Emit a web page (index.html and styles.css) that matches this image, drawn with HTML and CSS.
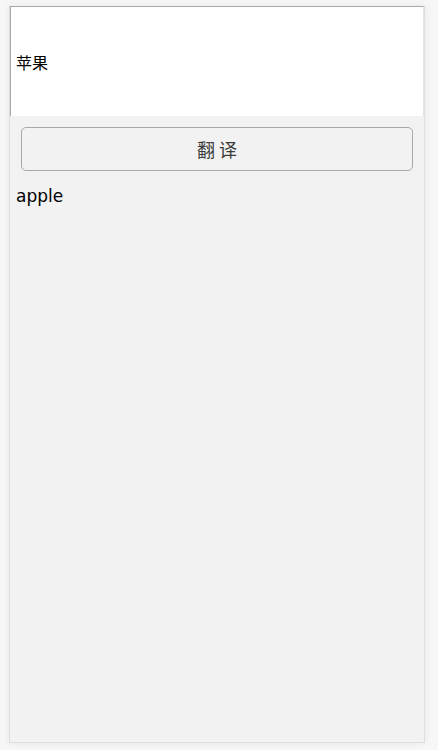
FILE: index.html
```html
<!DOCTYPE html>
<html lang="zh">
<head>
<meta charset="utf-8">
<title>翻译</title>
<link rel="stylesheet" href="styles.css">
</head>
<body>
<div class="app">
  <input class="source" type="text" value="苹果">
  <button class="translate">翻 译</button>
  <div class="result">apple</div>
</div>
</body>
</html>
```
FILE: styles.css
```css
html, body {
  margin: 0;
  padding: 0;
  background: #f7f7f7;
}
body {
  padding: 6px 13px 7px 9px;
  font-family: "DejaVu Sans", "Noto Sans CJK SC", sans-serif;
}
.app {
  height: 737px;
  box-sizing: border-box;
  background: #f2f2f2;
  border: 1px solid #dedede;
  border-top: none;
  box-shadow: 0 0 8px rgba(0, 0, 0, 0.07);
  display: flex;
  flex-direction: column;
}
.source {
  display: block;
  box-sizing: border-box;
  width: 100%;
  height: 110px;
  margin: 0;
  padding: 0 0 0 5px;
  background: #fff;
  border: none;
  border-top: 1px solid #a8a8a8;
  border-left: 1px solid #a8a8a8;
  border-right: 1px solid #e4e4e4;
  font-family: "Liberation Sans", "Noto Sans CJK SC", sans-serif;
  font-size: 16px;
  color: #000;
  outline: none;
}
.translate {
  display: block;
  box-sizing: border-box;
  margin: 11px 11px 0 11px;
  height: 44px;
  background: #f2f2f2;
  border: 1px solid #a9a9a9;
  border-radius: 5px;
  font-family: "Noto Sans CJK SC", sans-serif;
  font-size: 18px;
  font-weight: 400;
  color: #3a3a3a;
  padding: 0;
}
.result {
  margin: 14px 0 0 6px;
  font-family: "DejaVu Sans", sans-serif;
  font-size: 17px;
  line-height: 22px;
  color: #000;
}
```
